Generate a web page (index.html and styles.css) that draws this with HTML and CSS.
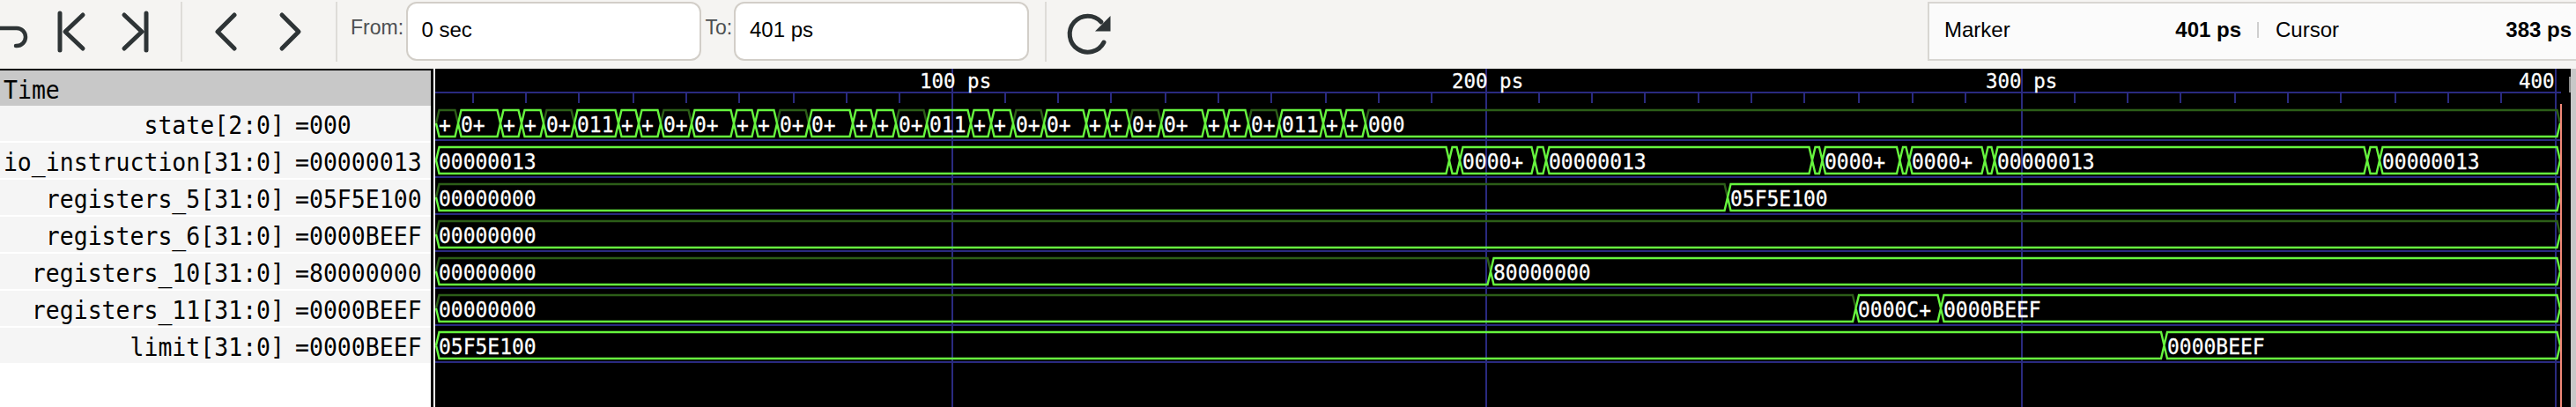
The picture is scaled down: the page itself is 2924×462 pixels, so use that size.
FILE: index.html
```html
<!DOCTYPE html>
<html lang="en">
<head>
<meta charset="utf-8">
<title>Waveform viewer</title>
<link rel="stylesheet" href="styles.css">
</head>
<body>
<header class="toolbar">
  <svg class="tool tool-hook" viewBox="0 0 50 78"><path d="M-4 32H19a10 10 0 0 1 0 20h-1"/></svg>
  <svg class="tool tool-first" viewBox="50 0 65 78"><path d="M68 15V57M94 17L74 36L94 55"/></svg>
  <svg class="tool tool-last" viewBox="115 0 90 78"><path d="M166 15V57M141 17L161 36L141 55"/></svg>
  <span class="sep"></span>
  <svg class="tool tool-prev" viewBox="207 0 86 78"><path d="M266 17L247 36L266 55"/></svg>
  <svg class="tool tool-next" viewBox="293 0 88 78"><path d="M320 17L339 36L320 55"/></svg>
  <span class="sep"></span>
  <label class="range-label from-label">From:</label>
  <input class="range-input" value="0 sec">
  <label class="range-label to-label">To:</label>
  <input class="range-input" value="401 ps">
  <span class="sep sep-after"></span>
  <svg class="tool tool-reload" viewBox="1187 0 90 78"><path d="M1252 48A20.500 20.500 0 1 1 1249 25"/><path class="solid" d="M1259.500 18V35.500H1242Z"/></svg>
  <div class="status">
    <div class="status-pair"><span>Marker</span><b>401 ps</b></div>
    <span class="status-sep"></span>
    <div class="status-pair status-cursor"><span>Cursor</span><b>383 ps</b></div>
  </div>
</header>
<main class="viewer">
  <aside class="signals">
    <div class="signals-head"><span class="stretched">Time</span></div>
    <div class="signal"><span class="signal-name">state[2:0]</span><span class="signal-value">=000</span></div>
    <div class="signal"><span class="signal-name">io_instruction[31:0]</span><span class="signal-value">=00000013</span></div>
    <div class="signal"><span class="signal-name">registers_5[31:0]</span><span class="signal-value">=05F5E100</span></div>
    <div class="signal"><span class="signal-name">registers_6[31:0]</span><span class="signal-value">=0000BEEF</span></div>
    <div class="signal"><span class="signal-name">registers_10[31:0]</span><span class="signal-value">=80000000</span></div>
    <div class="signal"><span class="signal-name">registers_11[31:0]</span><span class="signal-value">=0000BEEF</span></div>
    <div class="signal"><span class="signal-name">limit[31:0]</span><span class="signal-value">=0000BEEF</span></div>
  </aside>
  <svg class="wave" viewBox="494 78 2424 384">
    <path class="grid" d="M1081 78V462M1687 78V462M2295 78V462M2901 78V462"/>
    <path class="grid" d="M494 105H2907M494 159H2907M494 201H2907M494 243H2907M494 285H2907M494 327H2907M494 369H2907M494 411H2907"/>
    <path class="grid" d="M537 105V117M597 105V117M657 105V117M719 105V117M779 105V117M839 105V117M901 105V117M961 105V117M1021 105V117M1141 105V117M1201 105V117M1261 105V117M1323 105V117M1383 105V117M1443 105V117M1505 105V117M1565 105V117M1625 105V117M1747 105V117M1807 105V117M1867 105V117M1928 105V117M1988 105V117M2048 105V117M2110 105V117M2171 105V117M2231 105V117M2355 105V117M2415 105V117M2475 105V117M2537 105V117M2597 105V117M2657 105V117M2719 105V117M2779 105V117M2839 105V117"/>
    <text class="axis" x="1044" y="100">100 ps</text>
    <text class="axis" x="1648" y="100">200 ps</text>
    <text class="axis" x="2254" y="100">300 ps</text>
    <text class="axis" x="2859" y="100">400</text>

    <g transform="translate(0 140)">
      <path class="dim" d="M495 0l3.500-15H516.500l3.500 15M617 0l3.500-15H648.500l3.500 15M750 0l3.500-15H781.500l3.500 15M882 0l3.500-15H914.500l3.500 15M1017 0l3.500-15H1048.500l3.500 15M1150 0l3.500-15H1181.500l3.500 15M1282 0l3.500-15H1314.500l3.500 15M1417 0l3.500-15H1448.500l3.500 15M1550 0l3.500-15H2902.500l3.500 15"/>
      <path class="bus" d="M520 0l3.500-15H564.500l3.500 15l3.500-15H588.500l3.500 15l3.500-15H613.500l3.500 15M652 0l3.500-15H698.500l3.500 15l3.500-15H721.500l3.500 15l3.500-15H746.500l3.500 15M785 0l3.500-15H829.500l3.500 15l3.500-15H853.500l3.500 15l3.500-15H878.500l3.500 15M918 0l3.500-15H964.500l3.500 15l3.500-15H988.500l3.500 15l3.500-15H1013.500l3.500 15M1052 0l3.500-15H1098.500l3.500 15l3.500-15H1121.500l3.500 15l3.500-15H1146.500l3.500 15M1185 0l3.500-15H1229.500l3.500 15l3.500-15H1253.500l3.500 15l3.500-15H1278.500l3.500 15M1318 0l3.500-15H1364.500l3.500 15l3.500-15H1388.500l3.500 15l3.500-15H1413.500l3.500 15M1452 0l3.500-15H1498.500l3.500 15l3.500-15H1521.500l3.500 15l3.500-15H1546.500l3.500 15"/>
      <path class="bus" d="M495 0l3.500 15H516.500l3.500-15l3.500 15H564.500l3.500-15l3.500 15H588.500l3.500-15l3.500 15H613.500l3.500-15l3.500 15H648.500l3.500-15l3.500 15H698.500l3.500-15l3.500 15H721.500l3.500-15l3.500 15H746.500l3.500-15l3.500 15H781.500l3.500-15l3.500 15H829.500l3.500-15l3.500 15H853.500l3.500-15l3.500 15H878.500l3.500-15l3.500 15H914.500l3.500-15l3.500 15H964.500l3.500-15l3.500 15H988.500l3.500-15l3.500 15H1013.500l3.500-15l3.500 15H1048.500l3.500-15l3.500 15H1098.500l3.500-15l3.500 15H1121.500l3.500-15l3.500 15H1146.500l3.500-15l3.500 15H1181.500l3.500-15l3.500 15H1229.500l3.500-15l3.500 15H1253.500l3.500-15l3.500 15H1278.500l3.500-15l3.500 15H1314.500l3.500-15l3.500 15H1364.500l3.500-15l3.500 15H1388.500l3.500-15l3.500 15H1413.500l3.500-15l3.500 15H1448.500l3.500-15l3.500 15H1498.500l3.500-15l3.500 15H1521.500l3.500-15l3.500 15H1546.500l3.500-15l3.500 15H2902.500l3.500-15"/>
      <text class="val" x="498" y="10">+</text><text class="val" x="523" y="10">0+</text><text class="val" x="571" y="10">+</text><text class="val" x="595" y="10">+</text><text class="val" x="620" y="10">0+</text><text class="val" x="655" y="10">011</text><text class="val" x="705" y="10">+</text><text class="val" x="728" y="10">+</text><text class="val" x="753" y="10">0+</text><text class="val" x="788" y="10">0+</text><text class="val" x="836" y="10">+</text><text class="val" x="860" y="10">+</text><text class="val" x="885" y="10">0+</text><text class="val" x="921" y="10">0+</text><text class="val" x="971" y="10">+</text><text class="val" x="995" y="10">+</text><text class="val" x="1020" y="10">0+</text><text class="val" x="1055" y="10">011</text><text class="val" x="1105" y="10">+</text><text class="val" x="1128" y="10">+</text><text class="val" x="1153" y="10">0+</text><text class="val" x="1188" y="10">0+</text><text class="val" x="1236" y="10">+</text><text class="val" x="1260" y="10">+</text><text class="val" x="1285" y="10">0+</text><text class="val" x="1321" y="10">0+</text><text class="val" x="1371" y="10">+</text><text class="val" x="1395" y="10">+</text><text class="val" x="1420" y="10">0+</text><text class="val" x="1455" y="10">011</text><text class="val" x="1505" y="10">+</text><text class="val" x="1528" y="10">+</text><text class="val" x="1553" y="10">000</text>
    </g>

    <g transform="translate(0 182)">
      <path class="bus" d="M495 0l3.500-15H1641.500l3.500 15l3.500-15H1653.500l3.500 15l3.500-15H1738.500l3.500 15l3.500-15H1751.500l3.500 15l3.500-15H2053.500l3.500 15l3.500-15H2065l3.500 15l3.500-15H2153l3.500 15l3.500-15H2163.500l3.500 15l3.500-15H2249.500l3.500 15l3.500-15H2260.500l3.500 15l3.500-15H2683.500l3.500 15l3.500-15H2697.500l3.500 15l3.500-15H2902.500l3.500 15"/>
      <path class="bus" d="M495 0l3.500 15H1641.500l3.500-15l3.500 15H1653.500l3.500-15l3.500 15H1738.500l3.500-15l3.500 15H1751.500l3.500-15l3.500 15H2053.500l3.500-15l3.500 15H2065l3.500-15l3.500 15H2153l3.500-15l3.500 15H2163.500l3.500-15l3.500 15H2249.500l3.500-15l3.500 15H2260.500l3.500-15l3.500 15H2683.500l3.500-15l3.500 15H2697.500l3.500-15l3.500 15H2902.500l3.500-15"/>
      <text class="val" x="498" y="10">00000013</text><text class="val" x="1660" y="10">0000+</text><text class="val" x="1758" y="10">00000013</text><text class="val" x="2071" y="10">0000+</text><text class="val" x="2170" y="10">0000+</text><text class="val" x="2267" y="10">00000013</text><text class="val" x="2704" y="10">00000013</text>
    </g>

    <g transform="translate(0 224)">
      <path class="dim" d="M495 0l3.500-15H1957.500l3.500 15"/>
      <path class="bus" d="M1961 0l3.500-15H2902.500l3.500 15M495 0l3.500 15H1957.500l3.500-15l3.500 15H2902.500l3.500-15"/>
      <text class="val" x="498" y="10">00000000</text><text class="val" x="1964" y="10">05F5E100</text>
    </g>

    <g transform="translate(0 266)">
      <path class="dim" d="M495 0l3.500-15H2902.500l3.500 15"/>
      <path class="bus" d="M495 0l3.500 15H2902.500l3.500-15"/>
      <text class="val" x="498" y="10">00000000</text>
    </g>

    <g transform="translate(0 308)">
      <path class="dim" d="M495 0l3.500-15H1688.500l3.500 15"/>
      <path class="bus" d="M1692 0l3.500-15H2902.500l3.500 15M495 0l3.500 15H1688.500l3.500-15l3.500 15H2902.500l3.500-15"/>
      <text class="val" x="498" y="10">00000000</text><text class="val" x="1695" y="10">80000000</text>
    </g>

    <g transform="translate(0 350)">
      <path class="dim" d="M495 0l3.500-15H2103l3.500 15"/>
      <path class="bus" d="M2106.500 0l3.500-15H2199.500l3.500 15l3.500-15H2902.500l3.500 15M495 0l3.500 15H2103l3.500-15l3.500 15H2199.500l3.500-15l3.500 15H2902.500l3.500-15"/>
      <text class="val" x="498" y="10">00000000</text><text class="val" x="2109" y="10">0000C+</text><text class="val" x="2206" y="10">0000BEEF</text>
    </g>

    <g transform="translate(0 392)">
      <path class="bus" d="M495 0l3.500-15H2453l3.500 15l3.500-15H2902.500l3.500 15M495 0l3.500 15H2453l3.500-15l3.500 15H2902.500l3.500-15"/>
      <text class="val" x="498" y="10">05F5E100</text><text class="val" x="2460" y="10">0000BEEF</text>
    </g>

    <path class="marker" d="M2907 118V462"/>
    <path class="handle" d="M2917 87V105"/>
  </svg>
  <div class="scroll-strip"></div>
</main>
</body>
</html>
```
FILE: styles.css
```css
* { box-sizing: border-box; }
html, body { margin: 0; height: 100%; }
body {
  width: 2924px;
  height: 462px;
  overflow: hidden;
  background: #fff;
  font-family: "Liberation Sans", Arial, sans-serif;
  display: flex;
  flex-direction: column;
}
.toolbar {
  height: 78px;
  flex: none;
  display: flex;
  align-items: flex-start;
  background: #f5f4f2;
}
.tool {
  height: 78px;
  flex: none;
  overflow: hidden;
  fill: none;
  stroke: #2e3436;
  stroke-width: 5;
  stroke-linecap: round;
  stroke-linejoin: round;
}
.tool .solid { fill: #2e3436; stroke: none; }
.tool-hook { width: 50px; stroke-width: 4.500; }
.tool-first { width: 65px; }
.tool-last { width: 90px; }
.tool-prev { width: 86px; }
.tool-next { width: 88px; }
.tool-reload { width: 90px; }
.sep {
  width: 2px;
  height: 68px;
  margin-top: 2px;
  flex: none;
  background: #dedcd8;
}
.sep-after { margin-left: 18px; }
.range-label {
  flex: none;
  height: 67px;
  line-height: 66px;
  font-size: 23px;
  color: #4c4f51;
  margin-top: -2px;
}
.from-label { margin-left: 15px; width: 62.500px; }
.to-label { margin-left: 5px; width: 32.500px; }
.range-input {
  flex: none;
  width: 335px;
  height: 67px;
  margin-top: 2px;
  padding: 0 16px 4px;
  border: 2px solid #d2cec8;
  border-radius: 12px;
  background: #fff;
  font: 24px "Liberation Sans", Arial, sans-serif;
  color: #000;
  outline: none;
}
.status {
  margin-left: auto;
  margin-top: 2px;
  width: 736px;
  height: 67px;
  flex: none;
  display: flex;
  align-items: center;
  padding-left: 17px;
  padding-bottom: 3px;
  border: 2px solid #d8d6d2;
  border-right: 0;
  background: #fbfbfb;
  font-size: 24px;
  color: #000;
}
.status-pair {
  flex: none;
  width: 337px;
  display: flex;
  justify-content: space-between;
}
.status-pair b { font-weight: 700; }
.status-sep {
  width: 2px;
  height: 18px;
  margin: 0 19px 0 18px;
  flex: none;
  background: #cfcfcf;
}
.status-cursor { width: 336px; }
.viewer {
  height: 384px;
  flex: none;
  display: flex;
}
.signals {
  width: 492px;
  flex: none;
  border-top: 2px solid #000;
  border-right: 3px solid #000;
  font-family: "DejaVu Sans Mono", monospace;
  font-size: 26.500px;
  color: #000;
}
.signals-head {
  height: 40px;
  line-height: 45px;
  padding-left: 4px;
  background: #c8c8c8;
}
.signal {
  height: 40px;
  margin-bottom: 2px;
  display: flex;
  line-height: 45px;
  white-space: pre;
  background: #f5f5f5;
}
.stretched,
.signal-name,
.signal-value {
  display: inline-block;
  height: 45px;
  transform: scaleY(1.05);
  transform-origin: 50% 70%;
}
.signal-name {
  width: 323px;
  flex: none;
  text-align: right;
}
.signal-value { margin-left: 12px; }
.wave {
  width: 2424px;
  height: 384px;
  margin-left: 2px;
  flex: none;
  display: block;
  background: #000;
}
.grid { fill: none; stroke: #2a2a80; stroke-width: 2; }
.bus { fill: none; stroke: #66f53e; stroke-width: 2.400; }
.dim { fill: none; stroke: #2c5e18; stroke-width: 2.400; }
.marker { fill: none; stroke: #f08878; stroke-width: 2; }
.handle { fill: none; stroke: #8a8a8a; stroke-width: 2; }
.axis, .val {
  fill: #fff;
  stroke: #fff;
  stroke-width: 0.250;
  font-family: "DejaVu Sans Mono", monospace;
  font-size: 23px;
  white-space: pre;
  transform-box: fill-box;
  transform-origin: 50% 80%;
  transform: scaleY(1.07);
}
.axis { font-size: 22.500px; transform: scaleY(1.05); }
.scroll-strip {
  width: 6px;
  flex: none;
  background: #c8c8c8;
}
```
